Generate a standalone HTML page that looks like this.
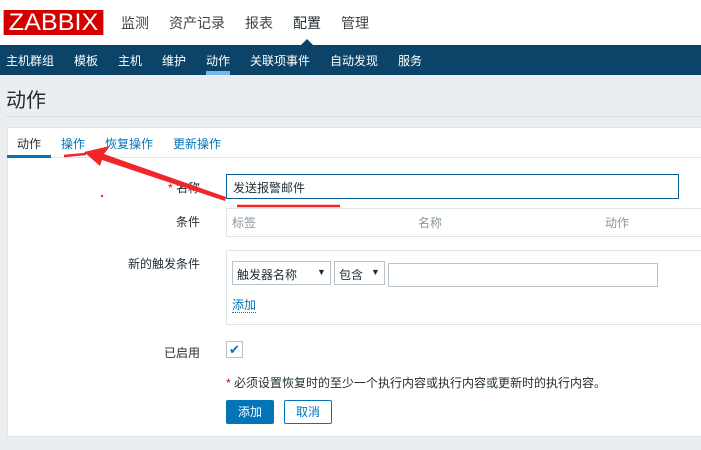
<!DOCTYPE html>
<html><head><meta charset="utf-8"><style>
*{margin:0;padding:0;box-sizing:border-box}
body{width:701px;height:450px;overflow:hidden;background:#ebeef0;font-family:"Liberation Sans","Noto Sans CJK SC",sans-serif;font-size:12px;color:#1f2c33;position:relative}
.a{position:absolute;white-space:nowrap}
.top{left:0;top:0;width:701px;height:45px;background:#fff}
.logo{left:6px;top:10px;width:95px;height:25px;background:#d40000;color:#fff;font-size:24px;line-height:25px;text-align:center;letter-spacing:0px;transform:scaleX(1.05)}
.m{top:13px;font-size:14px;color:#444}
.nav{left:0;top:45px;width:701px;height:30px;background:#0b4468}
.n{top:52px;color:#fff;font-size:12px}
.lbl{font-size:12px;text-align:right;width:120px;color:#1f2c33}
.box{border:1px solid #dfe4e7;background:#fff}
</style></head><body>
<div class="a top"></div>
<div class="a logo">ZABBIX</div>
<div class="a m" style="left:121px">监测</div>
<div class="a m" style="left:169px">资产记录</div>
<div class="a m" style="left:245px">报表</div>
<div class="a m" style="left:293px;color:#1f2c33">配置</div>
<div class="a m" style="left:341px">管理</div>
<div class="a" style="left:300px;top:39px;width:0;height:0;border-left:7px solid transparent;border-right:7px solid transparent;border-bottom:7px solid #0b4468"></div>
<div class="a nav"></div>
<div class="a n" style="left:6px">主机群组</div>
<div class="a n" style="left:74px">模板</div>
<div class="a n" style="left:118px">主机</div>
<div class="a n" style="left:162px">维护</div>
<div class="a n" style="left:206px">动作</div>
<div class="a" style="left:206px;top:71px;width:24px;height:4px;background:#75b9e7"></div>
<div class="a n" style="left:250px">关联项事件</div>
<div class="a n" style="left:330px">自动发现</div>
<div class="a n" style="left:398px">服务</div>
<div class="a" style="left:6px;top:84px;font-size:20px;color:#1f2c33">动作</div>
<div class="a" style="left:6px;top:116px;width:695px;height:1px;background:#d9dde0"></div>
<div class="a box" style="left:7px;top:127px;width:700px;height:310px"></div>
<div class="a" style="left:7px;top:157px;width:694px;height:1px;background:#e3e6e8"></div>
<div class="a" style="left:17px;top:135px">动作</div>
<div class="a" style="left:7px;top:155px;width:44px;height:3px;background:#0275b8"></div>
<div class="a" style="left:61px;top:135px;color:#0275b8">操作</div>
<div class="a" style="left:105px;top:135px;color:#0275b8">恢复操作</div>
<div class="a" style="left:173px;top:135px;color:#0275b8">更新操作</div>
<div class="a lbl" style="left:80px;top:179px"><span style="color:#d40000">*</span> 名称</div>
<div class="a" style="left:226px;top:174px;width:453px;height:25px;border:1px solid #0b5e95;background:#fff;padding:4px 6px">发送报警邮件</div>
<div class="a lbl" style="left:80px;top:213px">条件</div>
<div class="a box" style="left:226px;top:208px;width:480px;height:29px"></div>
<div class="a" style="left:232px;top:214px;color:#8a969d">标签</div>
<div class="a" style="left:418px;top:214px;color:#8a969d">名称</div>
<div class="a" style="left:605px;top:214px;color:#8a969d">动作</div>
<div class="a lbl" style="left:80px;top:255px">新的触发条件</div>
<div class="a box" style="left:226px;top:250px;width:480px;height:75px"></div>
<div class="a" style="left:232px;top:261px;width:99px;height:24px;border:1px solid #b8c2c7;padding:4px 4px">触发器名称<span style="position:absolute;left:84px;font-size:9px;top:5px">▼</span></div>
<div class="a" style="left:334px;top:261px;width:51px;height:24px;border:1px solid #b8c2c7;padding:4px 4px">包含<span style="position:absolute;left:36px;font-size:9px;top:5px">▼</span></div>
<div class="a" style="left:388px;top:263px;width:270px;height:24px;border:1px solid #b8c2c7;background:#fff"></div>
<div class="a" style="left:232px;top:298px;color:#0275b8;border-bottom:1px dotted #0275b8;line-height:14px">添加</div>
<div class="a lbl" style="left:80px;top:344px">已启用</div>
<div class="a" style="left:226px;top:341px;width:17px;height:17px;border:1px solid #b8c2c7;background:#fff;color:#0275b8;font-size:13px;line-height:15px;text-align:center">✔</div>
<div class="a" style="left:226px;top:374px;font-size:12px"><span style="color:#d40000">*</span> 必须设置恢复时的至少一个执行内容或执行内容或更新时的执行内容。</div>
<div class="a" style="left:226px;top:400px;width:48px;height:24px;background:#0275b8;color:#fff;text-align:center;line-height:24px;border-radius:2px">添加</div>
<div class="a" style="left:284px;top:400px;width:48px;height:24px;border:1px solid #0275b8;color:#0275b8;text-align:center;line-height:22px;border-radius:2px;background:#fff">取消</div>
<svg class="a" style="left:0;top:0" width="701" height="450">
<polygon points="226,197 104,154 110,146 84,152 100,166 102,160 225,201" fill="#f0262b"/>
<line x1="64" y1="156" x2="86" y2="154" stroke="#f0262b" stroke-width="2.5"/>
<line x1="237" y1="206" x2="340" y2="206" stroke="#f0262b" stroke-width="2.5"/>
<circle cx="102" cy="196" r="1.2" fill="#f0262b"/>
</svg>
</body></html>
